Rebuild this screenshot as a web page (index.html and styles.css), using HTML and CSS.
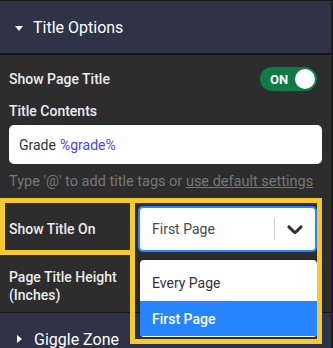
FILE: index.html
```html
<!DOCTYPE html>
<html lang="en">

<head>
    <meta charset="UTF-8">
    <meta name="viewport" content="width=device-width, initial-scale=1.0">
    <title>Title Options</title>
    <link rel="stylesheet" href="styles.css">
</head>

<body>
    <div class="panel">
        <div class="section-head">
            <span class="caret caret-down"></span>
            <span>Title Options</span>
        </div>

        <div class="section-body">
            <div class="row toggle-row">
                <div class="label">Show Page Title</div>
                <div class="toggle">
                    <span class="toggle-text">ON</span>
                    <span class="knob"></span>
                </div>
            </div>

            <div class="label field-label">Title Contents</div>
            <div class="text-input">Grade <span class="tag">%grade%</span></div>
            <div class="hint">Type '@' to add title tags or <a href="#">use default settings</a></div>

            <div class="row select-row">
                <div class="label label-col">Show Title On</div>
                <div class="select">
                    <div class="select-value">First Page</div>
                    <span class="separator"></span>
                    <div class="indicator">
                        <svg width="26" height="26" viewBox="0 0 20 20">
                            <path d="M4.516 7.548c0.436-0.446 1.043-0.481 1.576 0l3.908 3.747 3.908-3.747c0.533-0.481 1.141-0.446 1.574 0 0.436 0.445 0.408 1.197 0 1.615-0.406 0.418-4.695 4.502-4.695 4.502-0.217 0.223-0.502 0.335-0.787 0.335s-0.57-0.112-0.789-0.335c0 0-4.287-4.084-4.695-4.502s-0.436-1.170 0-1.615z" />
                        </svg>
                    </div>
                </div>
            </div>

            <div class="row height-row">
                <div class="label label-col">Page Title Height<br>(Inches)</div>
            </div>
        </div>

        <div class="section-head">
            <span class="caret caret-right"></span>
            <span>Giggle Zone</span>
        </div>

        <!-- open dropdown -->
        <div class="menu">
            <div class="option">Every Page</div>
            <div class="option option-selected">First Page</div>
        </div>

        <!-- highlight boxes -->
        <div class="highlight hl-label"></div>
        <div class="highlight hl-select"></div>
    </div>
</body>

</html>
```

FILE: styles.css
```css
body {
    margin: 0;
    background-color: #2d2d2d;
    font-family: Roboto, "Liberation Sans", sans-serif;
}

.panel {
    position: relative;
    width: 331px;
    height: 348px;
    overflow: hidden;
    background-color: #2d2d2d;
    border-right: 2px solid #1e1e1e;
}

.section-head {
    display: flex;
    align-items: center;
    gap: 10px;
    height: 52px;
    padding-left: 15px;
    background-color: #2e3346;
    border-top: 1px solid #151515;
    border-bottom: 2px solid #151515;
    color: #ffffff;
    font-size: 16px;
    font-weight: 400;
}

.caret {
    width: 0;
    height: 0;
}

.caret-down {
    border-left: 4.5px solid transparent;
    border-right: 4.5px solid transparent;
    border-top: 5px solid #ffffff;
    margin-top: 2px;
}

.caret-right {
    margin-left: 2px;
    margin-right: 2px;
    border-top: 4.5px solid transparent;
    border-bottom: 4.5px solid transparent;
    border-left: 5px solid #ffffff;
}

.section-body {
    padding: 12px 9px 8px 9px;
}

.row {
    display: flex;
    align-items: center;
}

.label {
    color: #ececec;
    font-size: 14px;
    font-weight: 500;
    line-height: 18px;
}

.toggle-row {
    justify-content: space-between;
    padding-right: 5px;
}

.toggle {
    display: flex;
    align-items: center;
    justify-content: space-between;
    width: 57px;
    height: 24px;
    padding: 0 2px 0 10px;
    box-sizing: border-box;
    border-radius: 12px;
    background-color: #117a45;
}

.toggle-text {
    color: #ffffff;
    font-size: 13px;
    font-weight: 700;
}

.knob {
    width: 20px;
    height: 20px;
    border-radius: 50%;
    background-color: #ffffff;
}

.field-label {
    margin-top: 11px;
}

.text-input {
    margin-top: 5px;
    height: 39px;
    padding-left: 10px;
    box-sizing: border-box;
    display: flex;
    align-items: center;
    gap: 4px;
    background-color: #ffffff;
    border-radius: 5px;
    color: #333333;
    font-size: 14px;
}

.tag {
    color: #4646f2;
}

.hint {
    margin-top: 9px;
    color: #777777;
    font-size: 14.5px;
    line-height: 18px;
    white-space: nowrap;
}

.hint a {
    color: #777777;
}

.select-row {
    margin-top: 16px;
}

.label-col {
    width: 130px;
}

.select {
    display: flex;
    align-items: center;
    width: 177px;
    height: 44px;
    box-sizing: border-box;
    background-color: #ffffff;
    border: 1px solid #2684ff;
    box-shadow: 0 0 0 1px #2684ff;
    border-radius: 4px;
}

.select-value {
    flex: 1;
    padding-left: 12px;
    color: #4a4a4a;
    font-size: 14px;
}

.separator {
    width: 1px;
    height: 22px;
    background-color: #cccccc;
}

.indicator {
    display: flex;
    align-items: center;
    justify-content: center;
    width: 40px;
}

.indicator svg {
    fill: #333333;
}

.height-row {
    margin-top: 17px;
}

.menu {
    position: absolute;
    left: 140px;
    top: 260px;
    width: 177px;
    padding: 4px 0 1px 0;
    background-color: #ffffff;
    border-radius: 4px;
    box-shadow: 0 0 0 1px rgba(0, 0, 0, 0.1), 0 4px 11px rgba(0, 0, 0, 0.1);
    z-index: 1;
}

.option {
    height: 36px;
    padding-left: 12px;
    display: flex;
    align-items: center;
    color: #333333;
    font-size: 14px;
}

.option:first-child {
    height: 37px;
}

.option-selected {
    height: 35px;
    background-color: #2684ff;
    color: #ffffff;
    font-weight: 500;
}

.highlight {
    position: absolute;
    box-sizing: border-box;
    border: 5px solid #f5c932;
    z-index: 2;
}

.hl-label {
    left: 0;
    top: 198px;
    width: 135px;
    height: 57px;
}

.hl-select {
    left: 130px;
    top: 198px;
    width: 192px;
    height: 146px;
}
```
